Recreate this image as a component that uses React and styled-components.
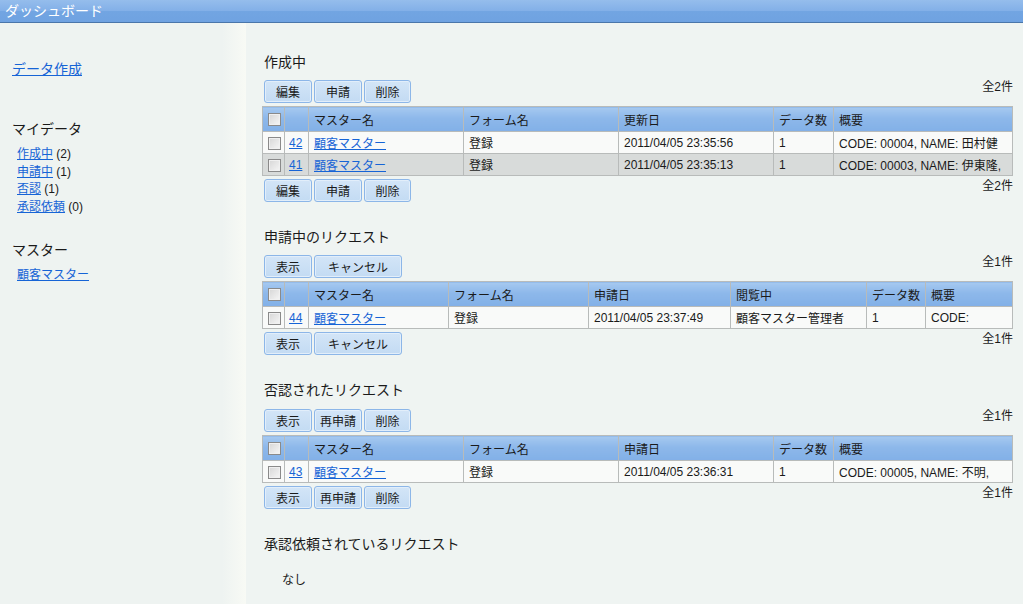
import React from 'react';
import styled, { createGlobalStyle } from 'styled-components';

const GlobalStyle = createGlobalStyle`
  html, body {
    margin: 0;
    padding: 0;
    background: #eff4f2;
    font-family: "Liberation Sans", "Noto Sans CJK JP", sans-serif;
    font-size: 12px;
    color: #1a1a1a;
  }
`;

const Page = styled.div`
  display: flex;
  flex-direction: column;
  min-height: 100vh;
`;

const TitleBar = styled.div`
  height: 22px;
  line-height: 22px;
  padding-left: 5px;
  color: #fff;
  font-size: 14px;
  background: linear-gradient(#95bdec 0%, #83b0e8 48%, #72a5e2 52%, #6fa2e1 100%);
  border-bottom: 1px solid #4a76aa;
`;

const Body = styled.div`
  flex: 1;
  display: flex;
`;

const Sidebar = styled.div`
  width: 246px;
  flex: none;
  box-sizing: border-box;
  padding: 37px 0 0 12px;
  background: linear-gradient(to right, #eef3f1 0, #eef3f1 222px, #f8faf5 246px);
`;

const Link = styled.a`
  color: #1664d6;
  text-decoration: underline;
  cursor: pointer;
`;

const TopLink = styled(Link)`
  display: block;
  font-size: 14px;
  line-height: 18px;
`;

const SideHeading = styled.div`
  margin-top: ${({ gap }) => gap}px;
  font-size: 14px;
  line-height: 18px;
`;

const SideList = styled.ul`
  list-style: none;
  margin: 8px 0 0 5px;
  padding: 0;
  font-size: 12px;
  line-height: 17.7px;
`;

const Main = styled.div`
  flex: 1;
  padding: 29px 11px 20px 16px;
`;

const Section = styled.div`
  margin-bottom: 25px;
`;

const Heading = styled.div`
  font-size: 14px;
  line-height: 20px;
  margin-bottom: ${({ gap }) => gap || 8}px;
  padding-left: 2px;
`;

const Toolbar = styled.div`
  display: flex;
  align-items: flex-start;
  justify-content: space-between;
  margin: ${({ bottom }) => (bottom ? '3px 0 0' : '0 0 3px')};
`;

const Buttons = styled.div`
  display: flex;
  gap: 2px;
  padding-left: 2px;
`;

const Button = styled.button`
  width: ${({ w }) => w || 48}px;
  height: 23px;
  padding: 0;
  box-sizing: border-box;
  font-family: inherit;
  font-size: 12px;
  color: #1a1a1a;
  background: linear-gradient(#d3e5f7, #c3dbf3);
  border: 1px solid #8cb6e8;
  border-radius: 3px;
  box-shadow: inset 0 0 0 1px #e2eefa;
  cursor: pointer;
`;

const Count = styled.div`
  line-height: 15px;
`;

const Table = styled.table`
  width: 100%;
  table-layout: fixed;
  border-collapse: collapse;
  border: 1px solid #b8bbba;
`;

const HeadCell = styled.th`
  height: 24px;
  padding: 0 5px;
  text-align: left;
  font-weight: normal;
  background: linear-gradient(#a6c9f0, #8db8ea 45%, #82b0e7 100%);
  border: 1px solid #b8bbba;
  border-bottom: 0;
  white-space: nowrap;
  overflow: hidden;
`;

const Row = styled.tr`
  background: ${({ alt }) => (alt ? '#d8dbda' : '#f9faf9')};
`;

const Cell = styled.td`
  height: 21px;
  padding: 0 5px;
  border: 1px solid #b8bbba;
  white-space: nowrap;
  overflow: hidden;
`;

const IdCell = styled(Cell)`
  padding: 0 4px;
`;

const Box = styled.span`
  display: inline-block;
  width: 11px;
  height: 11px;
  vertical-align: middle;
  border: 1px solid #8a8a8a;
  background: linear-gradient(135deg, #d6d6d6, #f6f6f6);
  box-shadow: inset 0 0 0 1px #f0f0f0;
`;

const Empty = styled.div`
  padding: 10px 0 0 20px;
  line-height: 16px;
`;

const createdRows = [
  { id: 42, master: '顧客マスター', form: '登録', date: '2011/04/05 23:35:56', num: 1, summary: 'CODE: 00004, NAME: 田村健' },
  { id: 41, master: '顧客マスター', form: '登録', date: '2011/04/05 23:35:13', num: 1, summary: 'CODE: 00003, NAME: 伊東隆,' },
];

const pendingRows = [
  { id: 44, master: '顧客マスター', form: '登録', date: '2011/04/05 23:37:49', viewer: '顧客マスター管理者', num: 1, summary: 'CODE:' },
];

const rejectedRows = [
  { id: 43, master: '顧客マスター', form: '登録', date: '2011/04/05 23:36:31', num: 1, summary: 'CODE: 00005, NAME: 不明,' },
];

function Actions({ labels, total, bottom }) {
  return (
    <Toolbar bottom={bottom}>
      <Buttons>
        {labels.map(([label, w]) => (
          <Button key={label} w={w}>{label}</Button>
        ))}
      </Buttons>
      <Count>{total}</Count>
    </Toolbar>
  );
}

function DataTable({ widths, dateLabel, rows, viewer, striped }) {
  return (
    <Table>
      <colgroup>
        {widths.map((w, i) => <col key={i} style={{ width: w }} />)}
      </colgroup>
      <thead>
        <tr>
          <HeadCell><Box /></HeadCell>
          <HeadCell />
          <HeadCell>マスター名</HeadCell>
          <HeadCell>フォーム名</HeadCell>
          <HeadCell>{dateLabel}</HeadCell>
          {viewer && <HeadCell>閲覧中</HeadCell>}
          <HeadCell>データ数</HeadCell>
          <HeadCell>概要</HeadCell>
        </tr>
      </thead>
      <tbody>
        {rows.map((r, i) => (
          <Row key={r.id} alt={striped && i % 2 === 1}>
            <Cell><Box /></Cell>
            <IdCell><Link>{r.id}</Link></IdCell>
            <Cell><Link>{r.master}</Link></Cell>
            <Cell>{r.form}</Cell>
            <Cell>{r.date}</Cell>
            {viewer && <Cell>{r.viewer}</Cell>}
            <Cell>{r.num}</Cell>
            <Cell>{r.summary}</Cell>
          </Row>
        ))}
      </tbody>
    </Table>
  );
}

const wideCols = [22, 24, 155, 155, 155, 60, 179];
const viewerCols = [22, 24, 140, 140, 142, 136, 59, 87];

export default function App() {
  const editButtons = [['編集'], ['申請'], ['削除', 47]];
  const pendingButtons = [['表示'], ['キャンセル', 88]];
  const rejectedButtons = [['表示'], ['再申請'], ['削除', 47]];

  return (
    <Page>
      <GlobalStyle />
      <TitleBar>ダッシュボード</TitleBar>
      <Body>
        <Sidebar>
          <TopLink>データ作成</TopLink>
          <SideHeading gap={42}>マイデータ</SideHeading>
          <SideList>
            <li><Link>作成中</Link> (2)</li>
            <li><Link>申請中</Link> (1)</li>
            <li><Link>否認</Link> (1)</li>
            <li><Link>承認依頼</Link> (0)</li>
          </SideList>
          <SideHeading gap={24}>マスター</SideHeading>
          <SideList>
            <li><Link>顧客マスター</Link></li>
          </SideList>
        </Sidebar>
        <Main>
          <Section>
            <Heading>作成中</Heading>
            <Actions labels={editButtons} total="全2件" />
            <DataTable widths={wideCols} dateLabel="更新日" rows={createdRows} striped />
            <Actions labels={editButtons} total="全2件" bottom />
          </Section>
          <Section>
            <Heading>申請中のリクエスト</Heading>
            <Actions labels={pendingButtons} total="全1件" />
            <DataTable widths={viewerCols} dateLabel="申請日" rows={pendingRows} viewer />
            <Actions labels={pendingButtons} total="全1件" bottom />
          </Section>
          <Section>
            <Heading gap={9}>否認されたリクエスト</Heading>
            <Actions labels={rejectedButtons} total="全1件" />
            <DataTable widths={wideCols} dateLabel="申請日" rows={rejectedRows} />
            <Actions labels={rejectedButtons} total="全1件" bottom />
          </Section>
          <Section>
            <Heading>承認依頼されているリクエスト</Heading>
            <Empty>なし</Empty>
          </Section>
        </Main>
      </Body>
    </Page>
  );
}
